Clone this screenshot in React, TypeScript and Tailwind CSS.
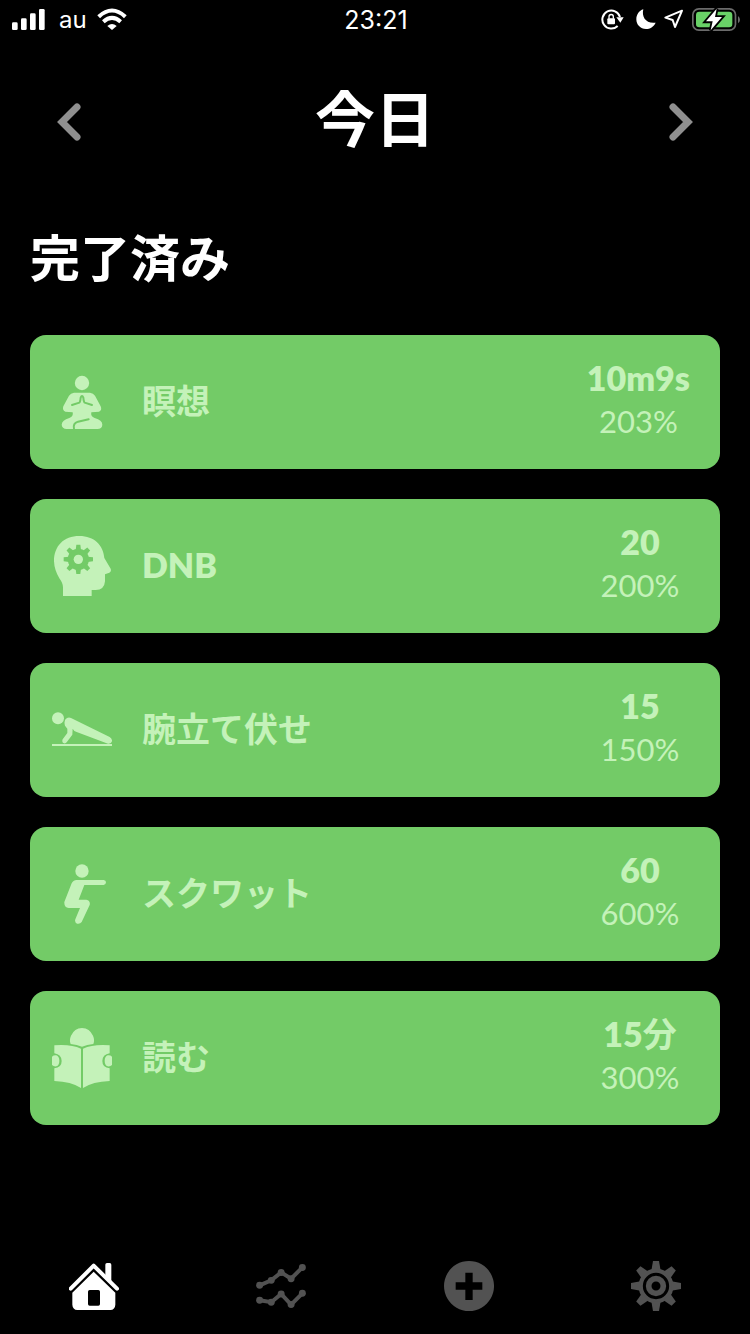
import React from "react";

type IconProps = { className?: string };

const CARD = "#73cb67";

function Signal() {
  return (
    <svg viewBox="36 27 99 63" className="h-[21px] w-[33px]" fill="white" aria-hidden="true">
      <rect x="36" y="67" width="17" height="23" rx="4" />
      <rect x="63" y="55" width="17" height="35" rx="4" />
      <rect x="90" y="40" width="17" height="50" rx="4" />
      <rect x="117" y="27" width="17" height="63" rx="4" />
    </svg>
  );
}

function Wifi() {
  return (
    <svg viewBox="289 25 90 66" className="h-[22px] w-[30px]" aria-hidden="true">
      <g fill="none" stroke="white" strokeWidth="12">
        <path d="M294 51 Q334 14 374 51" />
        <path d="M308 66 Q334 43 360 66" />
      </g>
      <path d="M334 91 L320 79 Q334 67 348 79 Z" fill="white" />
    </svg>
  );
}

function RotationLock() {
  return (
    <svg viewBox="32 26 69 63" className="mr-1 h-[21px] w-[23px]" aria-hidden="true">
      <path d="M89 50 A27 27 0 1 0 82 77" fill="none" stroke="white" strokeWidth="6" />
      <path d="M78 51 H100 L90 67 Z" fill="white" />
      <rect x="51" y="54" width="23" height="18" rx="3" fill="white" />
      <path d="M56 55 V49 A6 6 0 0 1 69 49 V55" fill="none" stroke="white" strokeWidth="4" />
    </svg>
  );
}

function Moon() {
  return (
    <svg viewBox="134 28 60 60" className="h-5 w-5" fill="white" aria-hidden="true">
      <path d="M156 29 C150 52 164 73 193 69 C187 81 176 88 164 88 C147 88 135 75 135 59 C135 45 143 33 156 29 Z" />
    </svg>
  );
}

function LocationArrow() {
  return (
    <svg viewBox="223 33 60 60" className="h-5 w-5" aria-hidden="true">
      <path d="M277 38 L227 59 L249 66 L256 87 Z" fill="none" stroke="white" strokeWidth="6" strokeLinejoin="round" />
    </svg>
  );
}

function Battery() {
  return (
    <svg viewBox="306 21 144 75" className="h-[25px] w-12" aria-hidden="true">
      <rect x="308.500" y="26.500" width="128" height="64" rx="18" fill="none" stroke="#6b6b6b" strokeWidth="5" />
      <path d="M444 48 Q450 53 450 59 Q450 65 444 70 Z" fill="#6b6b6b" />
      <rect x="318" y="35" width="109" height="47" rx="10" fill="#69d167" />
      <path d="M380 26 L348 64 H368 L362 91 L396 51 H375 Z" fill="white" stroke="black" strokeWidth="11" paintOrder="stroke" />
    </svg>
  );
}

function Chevron({ className }: IconProps) {
  return (
    <svg
      viewBox="0 0 24 38"
      className={className}
      fill="none"
      stroke="#8f8f8f"
      strokeWidth="7"
      strokeLinecap="round"
      aria-hidden="true"
    >
      <path d="M20 4 L5 19 L20 34" />
    </svg>
  );
}

function Meditation() {
  return (
    <svg viewBox="36 36 180 180" className="size-full" fill="currentColor" aria-hidden="true">
      <circle cx="126" cy="69" r="21.500" />
      <path d="M102 98 H150 Q160 99 165 107 L182 139 Q187 151 177 155 L154 157 Q151 170 164 174 Q187 181 187 194 Q186 207 172 207 H80 Q66 206 65 194 Q66 181 88 174 Q101 169 98 157 L76 155 Q66 151 70 139 L87 107 Q92 99 102 98 Z" />
      <g fill="none" stroke={CARD} strokeWidth="6" strokeLinecap="round" strokeLinejoin="round">
        <path d="M96 135 L118 128 Q121 126 122 113 Q126 103 130 113 Q131 126 134 128 L156 135" />
        <path d="M146 178 L114 185 Q98 190 102 207" />
      </g>
    </svg>
  );
}

function Mind() {
  return (
    <svg viewBox="36 48 180 180" className="size-full" fill="currentColor" aria-hidden="true">
      <path d="M69 228 V202 Q69 190 58 175 Q43 150 42 124 C42 78 71 48 118 48 C163 48 190 76 193 114 L212 146 Q215 154 208 158 L195 163 V184 Q193 211 165 210 H155 V228 Z" />
      <g fill={CARD}>
        <circle cx="115" cy="118" r="32" />
        {[0, 45, 90, 135, 180, 225, 270, 315].map((a) => (
          <path key={a} d="M107 90 L109 74 H121 L123 90 Z" transform={`rotate(${a} 115 118)`} />
        ))}
      </g>
      <circle cx="115" cy="118" r="14" />
    </svg>
  );
}

function PushUp() {
  return (
    <svg viewBox="36 30 180 180" className="size-full" fill="currentColor" aria-hidden="true">
      <circle cx="54" cy="85" r="18" />
      <path d="M93 84 L209 141 Q217 146 216 154 Q214 162 204 161 L110 126 L103 123 L98 116 L97 134 L80 157 Q76 162 70 159 Q65 155 68 148 L82 129 V116 L75 107 Q70 90 81 84 Q87 81 93 84 Z" />
      <rect x="36" y="162" width="180" height="6" />
    </svg>
  );
}

function Squat() {
  return (
    <svg viewBox="36 42 180 180" className="size-full" fill="currentColor" aria-hidden="true">
      <circle cx="126" cy="63" r="20" />
      <path d="M110 90 H191 Q198 91 198 97 Q198 104 191 105 H133 L116 149 H139 Q152 152 149 165 L125 216 Q120 223 111 221 Q103 217 106 208 L120 174 H86 Q72 172 73 156 L95 100 Q99 91 110 90 Z" />
    </svg>
  );
}

function Reading() {
  return (
    <svg viewBox="36 39 180 180" className="size-full" fill="currentColor" aria-hidden="true">
      <path d="M92 87 Q87 76 93 62 Q103 40 126 39 Q149 40 159 62 Q165 76 160 87 Q141 89 126 95 Q111 89 92 87 Z" />
      <path d="M43 91 Q93 87 123 101 V219 Q94 200 43 198 V160 Q65 158 65 138 Q65 119 43 115 Z" />
      <path d="M209 91 Q159 87 129 101 V219 Q158 200 209 198 V160 Q187 158 187 138 Q187 119 209 115 Z" />
      <path d="M36 125 Q41 120 49 121 Q58 125 58 137 Q58 151 49 154 Q41 155 36 150 Z" />
      <path d="M216 125 Q211 120 203 121 Q194 125 194 137 Q194 151 203 154 Q211 155 216 150 Z" />
    </svg>
  );
}

function Home() {
  return (
    <svg viewBox="87 63 150 150" className="size-full" fill="currentColor" aria-hidden="true">
      <path d="M196 107 V74 Q196 69 201 69 H209 Q214 69 214 74 V124 Z" />
      <path d="M92 146 L161 77 L231 146" fill="none" stroke="currentColor" strokeWidth="12" strokeLinecap="round" strokeLinejoin="round" />
      <path fillRule="evenodd" d="M161 95 L226 158 V194 Q225 209 211 210 H112 Q98 209 97 194 V158 Z M149 150 Q144 150 144 155 V192 Q144 197 149 197 H175 Q180 197 180 192 V155 Q180 150 175 150 Z" />
    </svg>
  );
}

function Trends() {
  const upper = [[661, 136], [696, 121], [726, 97], [756, 116], [790, 82]];
  const lower = [[661, 181], [696, 187], [726, 162], [756, 194], [790, 160]];
  return (
    <svg viewBox="650 63 151 150" className="size-full" fill="currentColor" aria-hidden="true">
      {[upper, lower].map((line, i) => (
        <g key={i}>
          <polyline points={line.join(" ")} fill="none" stroke="currentColor" strokeWidth="12" />
          {line.map(([x, y]) => (
            <circle key={x} cx={x} cy={y} r="10.500" />
          ))}
        </g>
      ))}
    </svg>
  );
}

function Add() {
  return (
    <svg viewBox="72 63 150 150" className="size-full" fill="currentColor" aria-hidden="true">
      <path fillRule="evenodd" d="M147 63 a75 75 0 1 0 0.100 0 Z M136 98 H158 V127 H187 V149 H158 V180 H136 V149 H107 V127 H136 Z" />
    </svg>
  );
}

function Settings() {
  return (
    <svg viewBox="633 63 150 150" className="size-full" fill="currentColor" aria-hidden="true">
      <circle cx="708" cy="138" r="46" fill="none" stroke="currentColor" strokeWidth="13" />
      {[0, 45, 90, 135, 180, 225, 270, 315].map((a) => (
        <path key={a} d="M694 92 L699 63 H717 L722 92 Z" transform={`rotate(${a} 708 138)`} />
      ))}
      <circle cx="708" cy="138" r="22" fill="none" stroke="currentColor" strokeWidth="17" />
    </svg>
  );
}

const habits = [
  { name: "瞑想", weight: "font-bold", value: "10m9s", unit: "", percent: "203%", Icon: Meditation },
  { name: "DNB", weight: "font-extrabold", value: "20", unit: "", percent: "200%", Icon: Mind },
  { name: "腕立て伏せ", weight: "font-bold", value: "15", unit: "", percent: "150%", Icon: PushUp },
  { name: "スクワット", weight: "font-bold", value: "60", unit: "", percent: "600%", Icon: Squat },
  { name: "読む", weight: "font-bold", value: "15", unit: "分", percent: "300%", Icon: Reading },
];

const tabs = [
  { label: "ホーム", Icon: Home, active: true },
  { label: "統計", Icon: Trends, active: false },
  { label: "追加", Icon: Add, active: false },
  { label: "設定", Icon: Settings, active: false },
];

export default function App() {
  return (
    <div className="flex min-h-screen flex-col bg-black font-['Lato','Noto_Sans_CJK_JP',sans-serif] text-white">
      <div className="grid h-10 grid-cols-3 items-center pr-2.5 pl-3 font-['Inter',sans-serif] text-2xl">
        <div className="flex items-center pb-0.5">
          <Signal />
          <span className="mr-2.5 ml-3.5 pt-0.5">au</span>
          <Wifi />
        </div>
        <time className="pt-0.5 text-center text-[25px]">23:21</time>
        <div className="flex items-center justify-end gap-2 pb-0.5">
          <RotationLock />
          <Moon />
          <LocationArrow />
          <Battery />
        </div>
      </div>

      <header className="flex h-[164px] items-center justify-between px-[57px]">
        <button type="button" aria-label="前の日" className="flex">
          <Chevron className="h-[38px] w-6" />
        </button>
        <h1 className="pb-1.5 text-[60px] leading-none font-bold">今日</h1>
        <button type="button" aria-label="次の日" className="flex">
          <Chevron className="h-[38px] w-6 rotate-180" />
        </button>
      </header>

      <main className="flex-1 px-[30px]">
        <h2 className="mt-[27px] text-[50px] leading-[54px] font-bold">完了済み</h2>
        <ul className="mt-[50px] flex flex-col gap-[30px]">
          {habits.map(({ name, weight, value, unit, percent, Icon }) => (
            <li key={name}>
              <button
                type="button"
                className="flex h-[134px] w-full items-center rounded-2xl bg-[#73cb67] pr-[30px] pl-[22px] text-left text-[#c4f2b9]"
              >
                <span className="size-[60px] shrink-0">
                  <Icon />
                </span>
                <span className={`ml-[30px] flex-1 pb-0.5 text-[34px] leading-10 ${weight}`}>{name}</span>
                <span className="flex min-w-[100px] flex-col pb-1.5 text-center">
                  <span className="text-[34px] leading-[44px] font-extrabold">
                    {value}
                    {unit && <span className="font-bold">{unit}</span>}
                  </span>
                  <span className="text-[31px] leading-[42px]">{percent}</span>
                </span>
              </button>
            </li>
          ))}
        </ul>
      </main>

      <nav className="grid h-[98px] grid-cols-4 pt-0.5">
        {tabs.map(({ label, Icon, active }) => (
          <button
            key={label}
            type="button"
            aria-label={label}
            aria-current={active ? "page" : undefined}
            className={active ? "flex items-center justify-center text-white" : "flex items-center justify-center text-[#525252]"}
          >
            <span className="size-[50px]">
              <Icon />
            </span>
          </button>
        ))}
      </nav>
    </div>
  );
}
